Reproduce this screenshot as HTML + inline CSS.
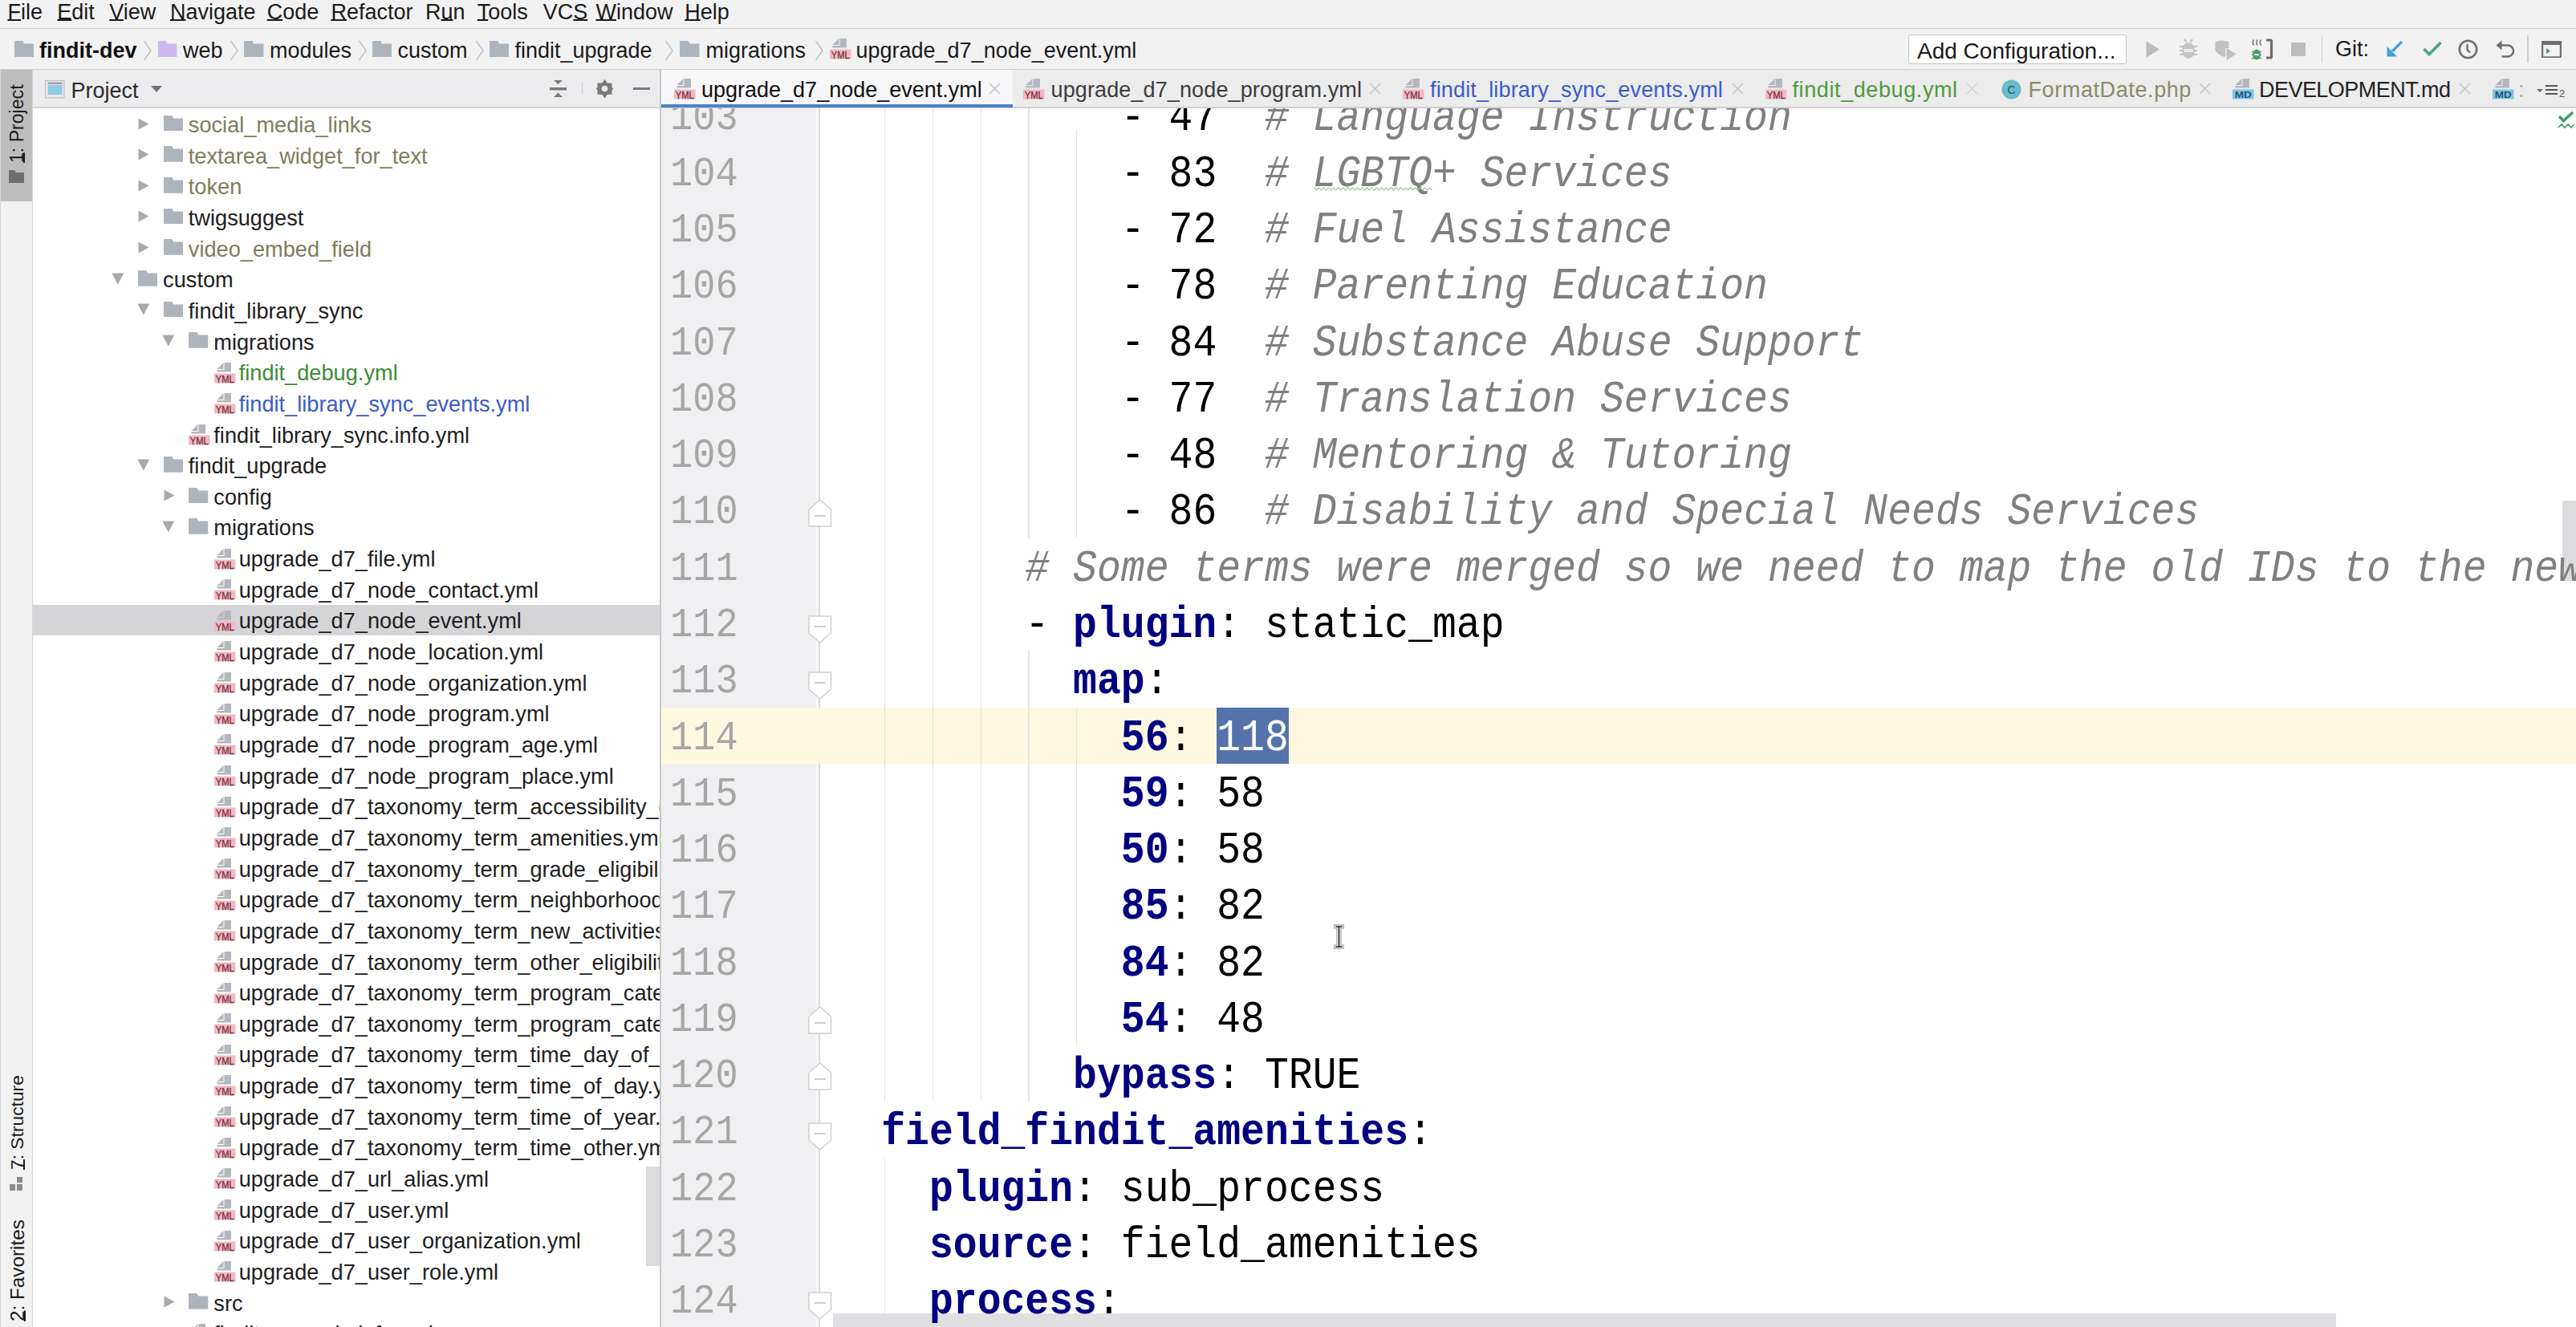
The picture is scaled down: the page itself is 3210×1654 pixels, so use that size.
<!DOCTYPE html><html><head><meta charset='utf-8'><style>
*{margin:0;padding:0;box-sizing:border-box}
html,body{width:3210px;height:1654px;overflow:hidden;background:#f2f2f2;font-family:"Liberation Sans", sans-serif}
.a{position:absolute}
.t{position:absolute;white-space:pre;font-family:"Liberation Sans", sans-serif;font-size:27px;line-height:1}
.m{position:absolute;white-space:pre;font-family:"Liberation Mono", monospace;}
u{text-decoration:underline;text-decoration-thickness:2px;text-underline-offset:0px}
</style></head><body>
<div class="a" style="left:0;top:0;width:3210px;height:35px;background:#f2f2f2"></div>
<div class="a" style="left:0;top:35px;width:3210px;height:1px;background:#d4d4d4"></div>
<div class="t" style="left:9.5px;top:2px;color:#1a1a1a"><u>F</u>ile</div>
<div class="t" style="left:71.3px;top:2px;color:#1a1a1a"><u>E</u>dit</div>
<div class="t" style="left:136.3px;top:2px;color:#1a1a1a"><u>V</u>iew</div>
<div class="t" style="left:212px;top:2px;color:#1a1a1a"><u>N</u>avigate</div>
<div class="t" style="left:332.7px;top:2px;color:#1a1a1a"><u>C</u>ode</div>
<div class="t" style="left:412.4px;top:2px;color:#1a1a1a"><u>R</u>efactor</div>
<div class="t" style="left:530px;top:2px;color:#1a1a1a">R<u>u</u>n</div>
<div class="t" style="left:594.7px;top:2px;color:#1a1a1a"><u>T</u>ools</div>
<div class="t" style="left:676.8px;top:2px;color:#1a1a1a">VC<u>S</u></div>
<div class="t" style="left:742.5px;top:2px;color:#1a1a1a"><u>W</u>indow</div>
<div class="t" style="left:853.3px;top:2px;color:#1a1a1a"><u>H</u>elp</div>
<div class="a" style="left:0;top:36px;width:3210px;height:50px;background:#f2f2f2"></div>
<div class="a" style="left:0;top:86px;width:3210px;height:1px;background:#d0d0d0"></div>
<svg class="a" style="left:17.5px;top:50.8px" width="24.5" height="20" viewBox="0 0 24.5 20"><path d="M0 0 H10.3 L12.3 3.5 H24.5 V20 H0 Z" fill="#aeb4bc"/></svg>
<div class="t" style="left:49px;top:50px;font-weight:bold;color:#111">findit-dev</div>
<svg class="a" style="left:178px;top:50px" width="12" height="26" viewBox="0 0 12 26"><path d="M1.5 1 L10 13 L1.5 25" fill="none" stroke="#b4b4b4" stroke-width="1.2"/></svg>
<svg class="a" style="left:197.4px;top:50.8px" width="23.5" height="20" viewBox="0 0 23.5 20"><path d="M0 0 H9.9 L11.9 3.5 H23.5 V20 H0 Z" fill="#cdb9f0"/></svg>
<div class="t" style="left:228px;top:50px;color:#1a1a1a">web</div>
<svg class="a" style="left:286px;top:50px" width="12" height="26" viewBox="0 0 12 26"><path d="M1.5 1 L10 13 L1.5 25" fill="none" stroke="#b4b4b4" stroke-width="1.2"/></svg>
<svg class="a" style="left:304px;top:50.8px" width="24.5" height="20" viewBox="0 0 24.5 20"><path d="M0 0 H10.3 L12.3 3.5 H24.5 V20 H0 Z" fill="#aeb4bc"/></svg>
<div class="t" style="left:336px;top:50px;color:#1a1a1a">modules</div>
<svg class="a" style="left:446px;top:50px" width="12" height="26" viewBox="0 0 12 26"><path d="M1.5 1 L10 13 L1.5 25" fill="none" stroke="#b4b4b4" stroke-width="1.2"/></svg>
<svg class="a" style="left:464px;top:50.8px" width="24" height="20" viewBox="0 0 24 20"><path d="M0 0 H10.1 L12.1 3.5 H24 V20 H0 Z" fill="#aeb4bc"/></svg>
<div class="t" style="left:495.5px;top:50px;color:#1a1a1a">custom</div>
<svg class="a" style="left:592px;top:50px" width="12" height="26" viewBox="0 0 12 26"><path d="M1.5 1 L10 13 L1.5 25" fill="none" stroke="#b4b4b4" stroke-width="1.2"/></svg>
<svg class="a" style="left:609.7px;top:50.8px" width="24.5" height="20" viewBox="0 0 24.5 20"><path d="M0 0 H10.3 L12.3 3.5 H24.5 V20 H0 Z" fill="#aeb4bc"/></svg>
<div class="t" style="left:641.5px;top:50px;color:#1a1a1a">findit_upgrade</div>
<svg class="a" style="left:828px;top:50px" width="12" height="26" viewBox="0 0 12 26"><path d="M1.5 1 L10 13 L1.5 25" fill="none" stroke="#b4b4b4" stroke-width="1.2"/></svg>
<svg class="a" style="left:847px;top:50.8px" width="24.5" height="20" viewBox="0 0 24.5 20"><path d="M0 0 H10.3 L12.3 3.5 H24.5 V20 H0 Z" fill="#aeb4bc"/></svg>
<div class="t" style="left:879.5px;top:50px;color:#1a1a1a">migrations</div>
<svg class="a" style="left:1015px;top:50px" width="12" height="26" viewBox="0 0 12 26"><path d="M1.5 1 L10 13 L1.5 25" fill="none" stroke="#b4b4b4" stroke-width="1.2"/></svg>
<svg class="a" style="left:1034px;top:48px" width="27" height="27" viewBox="0 0 27 27"><path d="M12.5 0 H21 V11.5 H3.5 V9 H12.5 Z" fill="#b4b8be"/><path d="M3.5 8 L11.5 0 V8 Z" fill="#b4b8be"/><rect x="0" y="13.5" width="26.5" height="12" fill="#f1b9c4"/><text x="13.2" y="24.6" text-anchor="middle" font-family="Liberation Sans" font-size="12.5" fill="#7a2f3f" stroke="#7a2f3f" stroke-width="0.3" textLength="23" lengthAdjust="spacingAndGlyphs">YML</text></svg>
<div class="t" style="left:1066.5px;top:50px;color:#1a1a1a">upgrade_d7_node_event.yml</div>
<div class="a" style="left:2378px;top:42.5px;width:271.5px;height:37px;background:#fff;border:1px solid #c4c4c4;border-radius:3px"></div>
<div class="t" style="left:2389px;top:49.5px;color:#1a1a1a;font-size:28px">Add Configuration...</div>
<svg class="a" style="left:2674px;top:51px" width="18" height="21" viewBox="0 0 18 21"><path d="M0.5 0.2 L17 10.5 L0.5 20.8Z" fill="#bcbcbc"/></svg>
<svg class="a" style="left:2716px;top:48px" width="22" height="26" viewBox="0 0 22 26"><path d="M6 1 L8.5 4.5 M16 1 L13.5 4.5" stroke="#c4c4c4" stroke-width="2.2"/><ellipse cx="11" cy="15" rx="8" ry="10" fill="#c4c4c4"/><path d="M0 10 H22 M0 15 H22 M0 20 H22" stroke="#c4c4c4" stroke-width="2.2"/><rect x="5.5" y="13" width="11" height="4" fill="#ededed"/></svg>
<svg class="a" style="left:2760px;top:50px" width="28" height="26" viewBox="0 0 28 26"><path d="M0.5 2 Q8 -1 17.5 2 V10 H13 V21 Q6 20.5 0.5 13Z" fill="#c2c2c2"/><path d="M14.5 10 L27 17.5 L14.5 25Z" fill="#c2c2c2"/></svg>
<svg class="a" style="left:2805px;top:48px" width="28" height="28" viewBox="0 0 28 28"><path d="M3.5 1.5 q-2.5 3.5 0 7 M8 1.5 q-2.5 3.5 0 7 M12.5 1.5 q-2.5 3.5 0 7" stroke="#7a7a68" stroke-width="1.6" fill="none"/><ellipse cx="7" cy="20" rx="4.8" ry="6.5" fill="#4a9a6a"/><path d="M1 16.5 H13 M1 20.5 H13 M1 24.5 H13" stroke="#4a9a6a" stroke-width="1.5"/><rect x="4" y="19" width="6" height="2.2" fill="#e8f2ea"/><path d="M19 2 H24 Q25.5 2 25.5 3.5 V22.5 Q25.5 24 24 24 H19" stroke="#6e6e6e" stroke-width="3.2" fill="none"/></svg>
<div class="a" style="left:2855px;top:52.5px;width:18px;height:17.5px;background:#bdbdbd"></div>
<div class="a" style="left:2892.5px;top:44px;width:1.5px;height:34px;background:#cfcfcf"></div>
<div class="t" style="left:2910px;top:48px;color:#1a1a1a">Git:</div>
<svg class="a" style="left:2974px;top:51px" width="20" height="20" viewBox="0 0 20 20"><path d="M19 1 L7 13" stroke="#3ea0dc" stroke-width="3.2"/><path d="M0.5 7 V19.5 H13Z" fill="#3ea0dc"/></svg>
<svg class="a" style="left:3018.5px;top:50.5px" width="24" height="19" viewBox="0 0 24 19"><path d="M1.5 10 L8 16.5 L22.5 2" stroke="#4aa57e" stroke-width="3.6" fill="none"/></svg>
<svg class="a" style="left:3063px;top:49px" width="25" height="25" viewBox="0 0 25 25"><circle cx="12.5" cy="12.5" r="10.7" stroke="#6e6e6e" stroke-width="2.6" fill="none"/><path d="M11.5 6 V13 L15 16.5" stroke="#6e6e6e" stroke-width="2.4" fill="none"/></svg>
<svg class="a" style="left:3110px;top:50px" width="25" height="23" viewBox="0 0 25 23"><path d="M6 6.5 H15 a7 7 0 0 1 0 14 H7.5" stroke="#6e6e6e" stroke-width="2.6" fill="none"/><path d="M0.5 6.5 L7.5 0.5 V12.5Z" fill="#6e6e6e"/></svg>
<div class="a" style="left:3149px;top:44px;width:1.5px;height:34px;background:#cfcfcf"></div>
<svg class="a" style="left:3166.5px;top:50.8px" width="25" height="21.5" viewBox="0 0 25 21.5"><rect x="1.1" y="1.1" width="22.8" height="19.3" stroke="#6e6e6e" stroke-width="2.2" fill="none"/><rect x="0" y="0" width="25" height="5" fill="#6e6e6e"/><path d="M6 9 L11 12.5 L6 16Z" fill="#3e9a6a"/></svg>
<div class="a" style="left:0;top:87px;width:40px;height:1567px;background:#f2f2f2"></div>
<div class="a" style="left:40px;top:87px;width:1px;height:1567px;background:#d6d6d6"></div>
<div class="a" style="left:0;top:87px;width:1px;height:1567px;background:#d6d6d6"></div>
<div class="a" style="left:1px;top:87px;width:39px;height:164px;background:#bebebe"></div>
<div class="t" style="left:10px;top:202.5px;font-size:23.1px;color:#1a1a1a;transform-origin:0 0;transform:rotate(-90deg)"><u>1</u>: Project</div>
<svg class="a" style="left:10.5px;top:212px" width="20" height="17" viewBox="0 0 20 17"><path d="M0 0 H7 L9 3 H19 V16 H0Z" fill="#6f6f6f"/></svg>
<div class="t" style="left:10px;top:1457.5px;font-size:22.8px;color:#1a1a1a;transform-origin:0 0;transform:rotate(-90deg)"><u>7</u>: Structure</div>
<svg class="a" style="left:12px;top:1467px" width="17" height="18" viewBox="0 0 17 18"><rect x="0" y="9" width="7" height="8" fill="#8a8a8a"/><rect x="9" y="9" width="7" height="8" fill="#8a8a8a"/><rect x="9" y="0" width="7" height="7" fill="#8a8a8a"/></svg>
<div class="t" style="left:10px;top:1646.5px;font-size:24.3px;color:#1a1a1a;transform-origin:0 0;transform:rotate(-90deg)"><u>2</u>: Favorites</div>
<div class="a" style="left:41px;top:87px;width:781px;height:47px;background:#ececee"></div>
<div class="a" style="left:41px;top:133px;width:781px;height:1.5px;background:#d2d2d4"></div>
<div class="a" style="left:41px;top:134.5px;width:781px;height:1519.5px;background:#ffffff"></div>
<div class="a" style="left:822px;top:87px;width:1.5px;height:1567px;background:#c9c9cb"></div>
<svg class="a" style="left:56px;top:100px" width="25" height="23" viewBox="0 0 25 23"><rect x="0.5" y="0.5" width="23.5" height="21.5" fill="#e8e8e8" stroke="#b8b8b8"/><rect x="3.5" y="6" width="18" height="12" fill="#8ccbe8"/><rect x="3.5" y="2.5" width="18" height="2.5" fill="#a0a0a0"/></svg>
<div class="t" style="left:88.5px;top:100px;color:#2a2a2a">Project</div>
<svg class="a" style="left:188px;top:107px" width="14" height="9"><path d="M0 0 H14 L7 8Z" fill="#707070"/></svg>
<svg class="a" style="left:685px;top:99px" width="22" height="23" viewBox="0 0 22 23"><path d="M5 1 H16 L10.5 6Z" fill="#7a7a7a"/><rect x="0" y="10" width="21" height="3.5" fill="#7a7a7a"/><path d="M5 22 H16 L10.5 16.5Z" fill="#7a7a7a"/></svg>
<div class="a" style="left:724.5px;top:103px;width:1.2px;height:14px;background:#c8c8c8"></div>
<svg class="a" style="left:742px;top:98px" width="23" height="25" viewBox="0 0 23 25"><path d="M11.5 0 L15 5 L21 5 L21 11 L23 12.5 L21 14 L21 20 L15 20 L11.5 25 L8 20 L2 20 L2 14 L0 12.5 L2 11 L2 5 L8 5Z" fill="#7a7a7a" transform="translate(11.5 12.5) scale(0.95) translate(-11.5 -12.5)"/><circle cx="11.5" cy="12.5" r="3.8" fill="#ececee"/></svg>
<div class="a" style="left:788.5px;top:108.8px;width:21.5px;height:3.5px;background:#7a7a7a"></div>
<div class="a" style="left:41px;top:135px;width:781px;height:1519px;overflow:hidden">
<svg class="a" style="left:131.3px;top:11.5px" width="14" height="15" viewBox="0 0 14 15"><path d="M0.5 0.5 L13.5 7.5 L0.5 14.5Z" fill="#a9a9a9"/></svg>
<svg class="a" style="left:162.8px;top:8.800000000000011px" width="24.3" height="19.7" viewBox="0 0 24.3 19.7"><path d="M0 0 H10.2 L12.2 3.5 H24.3 V19.7 H0 Z" fill="#aeb4bc"/></svg>
<div class="t" style="left:193.8px;top:7.10px;color:#807c5c;font-size:27.2px">social_media_links</div>
<svg class="a" style="left:131.3px;top:50.1px" width="14" height="15" viewBox="0 0 14 15"><path d="M0.5 0.5 L13.5 7.5 L0.5 14.5Z" fill="#a9a9a9"/></svg>
<svg class="a" style="left:162.8px;top:47.44500000000002px" width="24.3" height="19.7" viewBox="0 0 24.3 19.7"><path d="M0 0 H10.2 L12.2 3.5 H24.3 V19.7 H0 Z" fill="#aeb4bc"/></svg>
<div class="t" style="left:193.8px;top:45.75px;color:#807c5c;font-size:27.2px">textarea_widget_for_text</div>
<svg class="a" style="left:131.3px;top:88.8px" width="14" height="15" viewBox="0 0 14 15"><path d="M0.5 0.5 L13.5 7.5 L0.5 14.5Z" fill="#a9a9a9"/></svg>
<svg class="a" style="left:162.8px;top:86.09000000000003px" width="24.3" height="19.7" viewBox="0 0 24.3 19.7"><path d="M0 0 H10.2 L12.2 3.5 H24.3 V19.7 H0 Z" fill="#aeb4bc"/></svg>
<div class="t" style="left:193.8px;top:84.39px;color:#807c5c;font-size:27.2px">token</div>
<svg class="a" style="left:131.3px;top:127.4px" width="14" height="15" viewBox="0 0 14 15"><path d="M0.5 0.5 L13.5 7.5 L0.5 14.5Z" fill="#a9a9a9"/></svg>
<svg class="a" style="left:162.8px;top:124.73500000000001px" width="24.3" height="19.7" viewBox="0 0 24.3 19.7"><path d="M0 0 H10.2 L12.2 3.5 H24.3 V19.7 H0 Z" fill="#aeb4bc"/></svg>
<div class="t" style="left:193.8px;top:123.04px;color:#1e1e1e;font-size:27.2px">twigsuggest</div>
<svg class="a" style="left:131.3px;top:166.1px" width="14" height="15" viewBox="0 0 14 15"><path d="M0.5 0.5 L13.5 7.5 L0.5 14.5Z" fill="#a9a9a9"/></svg>
<svg class="a" style="left:162.8px;top:163.38000000000005px" width="24.3" height="19.7" viewBox="0 0 24.3 19.7"><path d="M0 0 H10.2 L12.2 3.5 H24.3 V19.7 H0 Z" fill="#aeb4bc"/></svg>
<div class="t" style="left:193.8px;top:161.68px;color:#807c5c;font-size:27.2px">video_embed_field</div>
<svg class="a" style="left:98.1px;top:204.7px" width="16" height="15" viewBox="0 0 16 15"><path d="M0.3 0.5 L15.3 0.5 L7.8 14.5Z" fill="#a9a9a9"/></svg>
<svg class="a" style="left:131.1px;top:202.02500000000003px" width="24.3" height="19.7" viewBox="0 0 24.3 19.7"><path d="M0 0 H10.2 L12.2 3.5 H24.3 V19.7 H0 Z" fill="#aeb4bc"/></svg>
<div class="t" style="left:162.1px;top:200.33px;color:#1e1e1e;font-size:27.2px">custom</div>
<svg class="a" style="left:129.8px;top:243.4px" width="16" height="15" viewBox="0 0 16 15"><path d="M0.3 0.5 L15.3 0.5 L7.8 14.5Z" fill="#a9a9a9"/></svg>
<svg class="a" style="left:162.8px;top:240.67000000000002px" width="24.3" height="19.7" viewBox="0 0 24.3 19.7"><path d="M0 0 H10.2 L12.2 3.5 H24.3 V19.7 H0 Z" fill="#aeb4bc"/></svg>
<div class="t" style="left:193.8px;top:238.97px;color:#1e1e1e;font-size:27.2px">findit_library_sync</div>
<svg class="a" style="left:161.3px;top:282.0px" width="16" height="15" viewBox="0 0 16 15"><path d="M0.3 0.5 L15.3 0.5 L7.8 14.5Z" fill="#a9a9a9"/></svg>
<svg class="a" style="left:194.3px;top:279.31500000000005px" width="24.3" height="19.7" viewBox="0 0 24.3 19.7"><path d="M0 0 H10.2 L12.2 3.5 H24.3 V19.7 H0 Z" fill="#aeb4bc"/></svg>
<div class="t" style="left:225.3px;top:277.62px;color:#1e1e1e;font-size:27.2px">migrations</div>
<svg class="a" style="left:225.8px;top:316.66px" width="27" height="27" viewBox="0 0 27 27"><path d="M12.5 0 H21 V11.5 H3.5 V9 H12.5 Z" fill="#b4b8be"/><path d="M3.5 8 L11.5 0 V8 Z" fill="#b4b8be"/><rect x="0" y="13.5" width="26.5" height="12" fill="#f1b9c4"/><text x="13.2" y="24.6" text-anchor="middle" font-family="Liberation Sans" font-size="12.5" fill="#7a2f3f" stroke="#7a2f3f" stroke-width="0.3" textLength="23" lengthAdjust="spacingAndGlyphs">YML</text></svg>
<div class="t" style="left:256.7px;top:316.26px;color:#3d8c35;font-size:27.2px">findit_debug.yml</div>
<svg class="a" style="left:225.8px;top:355.305px" width="27" height="27" viewBox="0 0 27 27"><path d="M12.5 0 H21 V11.5 H3.5 V9 H12.5 Z" fill="#b4b8be"/><path d="M3.5 8 L11.5 0 V8 Z" fill="#b4b8be"/><rect x="0" y="13.5" width="26.5" height="12" fill="#f1b9c4"/><text x="13.2" y="24.6" text-anchor="middle" font-family="Liberation Sans" font-size="12.5" fill="#7a2f3f" stroke="#7a2f3f" stroke-width="0.3" textLength="23" lengthAdjust="spacingAndGlyphs">YML</text></svg>
<div class="t" style="left:256.7px;top:354.91px;color:#3a5cc8;font-size:27.2px">findit_library_sync_events.yml</div>
<svg class="a" style="left:194.4px;top:393.95000000000005px" width="27" height="27" viewBox="0 0 27 27"><path d="M12.5 0 H21 V11.5 H3.5 V9 H12.5 Z" fill="#b4b8be"/><path d="M3.5 8 L11.5 0 V8 Z" fill="#b4b8be"/><rect x="0" y="13.5" width="26.5" height="12" fill="#f1b9c4"/><text x="13.2" y="24.6" text-anchor="middle" font-family="Liberation Sans" font-size="12.5" fill="#7a2f3f" stroke="#7a2f3f" stroke-width="0.3" textLength="23" lengthAdjust="spacingAndGlyphs">YML</text></svg>
<div class="t" style="left:225.3px;top:393.55px;color:#1e1e1e;font-size:27.2px">findit_library_sync.info.yml</div>
<svg class="a" style="left:129.8px;top:436.6px" width="16" height="15" viewBox="0 0 16 15"><path d="M0.3 0.5 L15.3 0.5 L7.8 14.5Z" fill="#a9a9a9"/></svg>
<svg class="a" style="left:162.8px;top:433.895px" width="24.3" height="19.7" viewBox="0 0 24.3 19.7"><path d="M0 0 H10.2 L12.2 3.5 H24.3 V19.7 H0 Z" fill="#aeb4bc"/></svg>
<div class="t" style="left:193.8px;top:432.20px;color:#1e1e1e;font-size:27.2px">findit_upgrade</div>
<svg class="a" style="left:162.8px;top:475.2px" width="14" height="15" viewBox="0 0 14 15"><path d="M0.5 0.5 L13.5 7.5 L0.5 14.5Z" fill="#a9a9a9"/></svg>
<svg class="a" style="left:194.3px;top:472.53999999999996px" width="24.3" height="19.7" viewBox="0 0 24.3 19.7"><path d="M0 0 H10.2 L12.2 3.5 H24.3 V19.7 H0 Z" fill="#aeb4bc"/></svg>
<div class="t" style="left:225.3px;top:470.84px;color:#1e1e1e;font-size:27.2px">config</div>
<svg class="a" style="left:161.3px;top:513.9px" width="16" height="15" viewBox="0 0 16 15"><path d="M0.3 0.5 L15.3 0.5 L7.8 14.5Z" fill="#a9a9a9"/></svg>
<svg class="a" style="left:194.3px;top:511.18499999999995px" width="24.3" height="19.7" viewBox="0 0 24.3 19.7"><path d="M0 0 H10.2 L12.2 3.5 H24.3 V19.7 H0 Z" fill="#aeb4bc"/></svg>
<div class="t" style="left:225.3px;top:509.49px;color:#1e1e1e;font-size:27.2px">migrations</div>
<svg class="a" style="left:225.8px;top:548.5300000000001px" width="27" height="27" viewBox="0 0 27 27"><path d="M12.5 0 H21 V11.5 H3.5 V9 H12.5 Z" fill="#b4b8be"/><path d="M3.5 8 L11.5 0 V8 Z" fill="#b4b8be"/><rect x="0" y="13.5" width="26.5" height="12" fill="#f1b9c4"/><text x="13.2" y="24.6" text-anchor="middle" font-family="Liberation Sans" font-size="12.5" fill="#7a2f3f" stroke="#7a2f3f" stroke-width="0.3" textLength="23" lengthAdjust="spacingAndGlyphs">YML</text></svg>
<div class="t" style="left:256.7px;top:548.13px;color:#1e1e1e;font-size:27.2px">upgrade_d7_file.yml</div>
<svg class="a" style="left:225.8px;top:587.1750000000001px" width="27" height="27" viewBox="0 0 27 27"><path d="M12.5 0 H21 V11.5 H3.5 V9 H12.5 Z" fill="#b4b8be"/><path d="M3.5 8 L11.5 0 V8 Z" fill="#b4b8be"/><rect x="0" y="13.5" width="26.5" height="12" fill="#f1b9c4"/><text x="13.2" y="24.6" text-anchor="middle" font-family="Liberation Sans" font-size="12.5" fill="#7a2f3f" stroke="#7a2f3f" stroke-width="0.3" textLength="23" lengthAdjust="spacingAndGlyphs">YML</text></svg>
<div class="t" style="left:256.7px;top:586.78px;color:#1e1e1e;font-size:27.2px">upgrade_d7_node_contact.yml</div>
<div class="a" style="left:0;top:619.32px;width:781px;height:37.5px;background:#d5d5d8"></div>
<svg class="a" style="left:225.8px;top:625.82px" width="27" height="27" viewBox="0 0 27 27"><path d="M12.5 0 H21 V11.5 H3.5 V9 H12.5 Z" fill="#b4b8be"/><path d="M3.5 8 L11.5 0 V8 Z" fill="#b4b8be"/><rect x="0" y="13.5" width="26.5" height="12" fill="#f1b9c4"/><text x="13.2" y="24.6" text-anchor="middle" font-family="Liberation Sans" font-size="12.5" fill="#7a2f3f" stroke="#7a2f3f" stroke-width="0.3" textLength="23" lengthAdjust="spacingAndGlyphs">YML</text></svg>
<div class="t" style="left:256.7px;top:625.42px;color:#1e1e1e;font-size:27.2px">upgrade_d7_node_event.yml</div>
<svg class="a" style="left:225.8px;top:664.465px" width="27" height="27" viewBox="0 0 27 27"><path d="M12.5 0 H21 V11.5 H3.5 V9 H12.5 Z" fill="#b4b8be"/><path d="M3.5 8 L11.5 0 V8 Z" fill="#b4b8be"/><rect x="0" y="13.5" width="26.5" height="12" fill="#f1b9c4"/><text x="13.2" y="24.6" text-anchor="middle" font-family="Liberation Sans" font-size="12.5" fill="#7a2f3f" stroke="#7a2f3f" stroke-width="0.3" textLength="23" lengthAdjust="spacingAndGlyphs">YML</text></svg>
<div class="t" style="left:256.7px;top:664.07px;color:#1e1e1e;font-size:27.2px">upgrade_d7_node_location.yml</div>
<svg class="a" style="left:225.8px;top:703.11px" width="27" height="27" viewBox="0 0 27 27"><path d="M12.5 0 H21 V11.5 H3.5 V9 H12.5 Z" fill="#b4b8be"/><path d="M3.5 8 L11.5 0 V8 Z" fill="#b4b8be"/><rect x="0" y="13.5" width="26.5" height="12" fill="#f1b9c4"/><text x="13.2" y="24.6" text-anchor="middle" font-family="Liberation Sans" font-size="12.5" fill="#7a2f3f" stroke="#7a2f3f" stroke-width="0.3" textLength="23" lengthAdjust="spacingAndGlyphs">YML</text></svg>
<div class="t" style="left:256.7px;top:702.71px;color:#1e1e1e;font-size:27.2px">upgrade_d7_node_organization.yml</div>
<svg class="a" style="left:225.8px;top:741.7550000000001px" width="27" height="27" viewBox="0 0 27 27"><path d="M12.5 0 H21 V11.5 H3.5 V9 H12.5 Z" fill="#b4b8be"/><path d="M3.5 8 L11.5 0 V8 Z" fill="#b4b8be"/><rect x="0" y="13.5" width="26.5" height="12" fill="#f1b9c4"/><text x="13.2" y="24.6" text-anchor="middle" font-family="Liberation Sans" font-size="12.5" fill="#7a2f3f" stroke="#7a2f3f" stroke-width="0.3" textLength="23" lengthAdjust="spacingAndGlyphs">YML</text></svg>
<div class="t" style="left:256.7px;top:741.36px;color:#1e1e1e;font-size:27.2px">upgrade_d7_node_program.yml</div>
<svg class="a" style="left:225.8px;top:780.4000000000001px" width="27" height="27" viewBox="0 0 27 27"><path d="M12.5 0 H21 V11.5 H3.5 V9 H12.5 Z" fill="#b4b8be"/><path d="M3.5 8 L11.5 0 V8 Z" fill="#b4b8be"/><rect x="0" y="13.5" width="26.5" height="12" fill="#f1b9c4"/><text x="13.2" y="24.6" text-anchor="middle" font-family="Liberation Sans" font-size="12.5" fill="#7a2f3f" stroke="#7a2f3f" stroke-width="0.3" textLength="23" lengthAdjust="spacingAndGlyphs">YML</text></svg>
<div class="t" style="left:256.7px;top:780.00px;color:#1e1e1e;font-size:27.2px">upgrade_d7_node_program_age.yml</div>
<svg class="a" style="left:225.8px;top:819.0450000000001px" width="27" height="27" viewBox="0 0 27 27"><path d="M12.5 0 H21 V11.5 H3.5 V9 H12.5 Z" fill="#b4b8be"/><path d="M3.5 8 L11.5 0 V8 Z" fill="#b4b8be"/><rect x="0" y="13.5" width="26.5" height="12" fill="#f1b9c4"/><text x="13.2" y="24.6" text-anchor="middle" font-family="Liberation Sans" font-size="12.5" fill="#7a2f3f" stroke="#7a2f3f" stroke-width="0.3" textLength="23" lengthAdjust="spacingAndGlyphs">YML</text></svg>
<div class="t" style="left:256.7px;top:818.65px;color:#1e1e1e;font-size:27.2px">upgrade_d7_node_program_place.yml</div>
<svg class="a" style="left:225.8px;top:857.69px" width="27" height="27" viewBox="0 0 27 27"><path d="M12.5 0 H21 V11.5 H3.5 V9 H12.5 Z" fill="#b4b8be"/><path d="M3.5 8 L11.5 0 V8 Z" fill="#b4b8be"/><rect x="0" y="13.5" width="26.5" height="12" fill="#f1b9c4"/><text x="13.2" y="24.6" text-anchor="middle" font-family="Liberation Sans" font-size="12.5" fill="#7a2f3f" stroke="#7a2f3f" stroke-width="0.3" textLength="23" lengthAdjust="spacingAndGlyphs">YML</text></svg>
<div class="t" style="left:256.7px;top:857.29px;color:#1e1e1e;font-size:27.2px">upgrade_d7_taxonomy_term_accessibility_options.yml</div>
<svg class="a" style="left:225.8px;top:896.335px" width="27" height="27" viewBox="0 0 27 27"><path d="M12.5 0 H21 V11.5 H3.5 V9 H12.5 Z" fill="#b4b8be"/><path d="M3.5 8 L11.5 0 V8 Z" fill="#b4b8be"/><rect x="0" y="13.5" width="26.5" height="12" fill="#f1b9c4"/><text x="13.2" y="24.6" text-anchor="middle" font-family="Liberation Sans" font-size="12.5" fill="#7a2f3f" stroke="#7a2f3f" stroke-width="0.3" textLength="23" lengthAdjust="spacingAndGlyphs">YML</text></svg>
<div class="t" style="left:256.7px;top:895.93px;color:#1e1e1e;font-size:27.2px">upgrade_d7_taxonomy_term_amenities.yml</div>
<svg class="a" style="left:225.8px;top:934.98px" width="27" height="27" viewBox="0 0 27 27"><path d="M12.5 0 H21 V11.5 H3.5 V9 H12.5 Z" fill="#b4b8be"/><path d="M3.5 8 L11.5 0 V8 Z" fill="#b4b8be"/><rect x="0" y="13.5" width="26.5" height="12" fill="#f1b9c4"/><text x="13.2" y="24.6" text-anchor="middle" font-family="Liberation Sans" font-size="12.5" fill="#7a2f3f" stroke="#7a2f3f" stroke-width="0.3" textLength="23" lengthAdjust="spacingAndGlyphs">YML</text></svg>
<div class="t" style="left:256.7px;top:934.58px;color:#1e1e1e;font-size:27.2px">upgrade_d7_taxonomy_term_grade_eligibility.yml</div>
<svg class="a" style="left:225.8px;top:973.625px" width="27" height="27" viewBox="0 0 27 27"><path d="M12.5 0 H21 V11.5 H3.5 V9 H12.5 Z" fill="#b4b8be"/><path d="M3.5 8 L11.5 0 V8 Z" fill="#b4b8be"/><rect x="0" y="13.5" width="26.5" height="12" fill="#f1b9c4"/><text x="13.2" y="24.6" text-anchor="middle" font-family="Liberation Sans" font-size="12.5" fill="#7a2f3f" stroke="#7a2f3f" stroke-width="0.3" textLength="23" lengthAdjust="spacingAndGlyphs">YML</text></svg>
<div class="t" style="left:256.7px;top:973.22px;color:#1e1e1e;font-size:27.2px">upgrade_d7_taxonomy_term_neighborhoods.yml</div>
<svg class="a" style="left:225.8px;top:1012.27px" width="27" height="27" viewBox="0 0 27 27"><path d="M12.5 0 H21 V11.5 H3.5 V9 H12.5 Z" fill="#b4b8be"/><path d="M3.5 8 L11.5 0 V8 Z" fill="#b4b8be"/><rect x="0" y="13.5" width="26.5" height="12" fill="#f1b9c4"/><text x="13.2" y="24.6" text-anchor="middle" font-family="Liberation Sans" font-size="12.5" fill="#7a2f3f" stroke="#7a2f3f" stroke-width="0.3" textLength="23" lengthAdjust="spacingAndGlyphs">YML</text></svg>
<div class="t" style="left:256.7px;top:1011.87px;color:#1e1e1e;font-size:27.2px">upgrade_d7_taxonomy_term_new_activities.yml</div>
<svg class="a" style="left:225.8px;top:1050.9150000000002px" width="27" height="27" viewBox="0 0 27 27"><path d="M12.5 0 H21 V11.5 H3.5 V9 H12.5 Z" fill="#b4b8be"/><path d="M3.5 8 L11.5 0 V8 Z" fill="#b4b8be"/><rect x="0" y="13.5" width="26.5" height="12" fill="#f1b9c4"/><text x="13.2" y="24.6" text-anchor="middle" font-family="Liberation Sans" font-size="12.5" fill="#7a2f3f" stroke="#7a2f3f" stroke-width="0.3" textLength="23" lengthAdjust="spacingAndGlyphs">YML</text></svg>
<div class="t" style="left:256.7px;top:1050.52px;color:#1e1e1e;font-size:27.2px">upgrade_d7_taxonomy_term_other_eligibility.yml</div>
<svg class="a" style="left:225.8px;top:1089.5600000000002px" width="27" height="27" viewBox="0 0 27 27"><path d="M12.5 0 H21 V11.5 H3.5 V9 H12.5 Z" fill="#b4b8be"/><path d="M3.5 8 L11.5 0 V8 Z" fill="#b4b8be"/><rect x="0" y="13.5" width="26.5" height="12" fill="#f1b9c4"/><text x="13.2" y="24.6" text-anchor="middle" font-family="Liberation Sans" font-size="12.5" fill="#7a2f3f" stroke="#7a2f3f" stroke-width="0.3" textLength="23" lengthAdjust="spacingAndGlyphs">YML</text></svg>
<div class="t" style="left:256.7px;top:1089.16px;color:#1e1e1e;font-size:27.2px">upgrade_d7_taxonomy_term_program_categories.yml</div>
<svg class="a" style="left:225.8px;top:1128.2050000000002px" width="27" height="27" viewBox="0 0 27 27"><path d="M12.5 0 H21 V11.5 H3.5 V9 H12.5 Z" fill="#b4b8be"/><path d="M3.5 8 L11.5 0 V8 Z" fill="#b4b8be"/><rect x="0" y="13.5" width="26.5" height="12" fill="#f1b9c4"/><text x="13.2" y="24.6" text-anchor="middle" font-family="Liberation Sans" font-size="12.5" fill="#7a2f3f" stroke="#7a2f3f" stroke-width="0.3" textLength="23" lengthAdjust="spacingAndGlyphs">YML</text></svg>
<div class="t" style="left:256.7px;top:1127.81px;color:#1e1e1e;font-size:27.2px">upgrade_d7_taxonomy_term_program_categories_old.yml</div>
<svg class="a" style="left:225.8px;top:1166.8500000000001px" width="27" height="27" viewBox="0 0 27 27"><path d="M12.5 0 H21 V11.5 H3.5 V9 H12.5 Z" fill="#b4b8be"/><path d="M3.5 8 L11.5 0 V8 Z" fill="#b4b8be"/><rect x="0" y="13.5" width="26.5" height="12" fill="#f1b9c4"/><text x="13.2" y="24.6" text-anchor="middle" font-family="Liberation Sans" font-size="12.5" fill="#7a2f3f" stroke="#7a2f3f" stroke-width="0.3" textLength="23" lengthAdjust="spacingAndGlyphs">YML</text></svg>
<div class="t" style="left:256.7px;top:1166.45px;color:#1e1e1e;font-size:27.2px">upgrade_d7_taxonomy_term_time_day_of_week.yml</div>
<svg class="a" style="left:225.8px;top:1205.4950000000001px" width="27" height="27" viewBox="0 0 27 27"><path d="M12.5 0 H21 V11.5 H3.5 V9 H12.5 Z" fill="#b4b8be"/><path d="M3.5 8 L11.5 0 V8 Z" fill="#b4b8be"/><rect x="0" y="13.5" width="26.5" height="12" fill="#f1b9c4"/><text x="13.2" y="24.6" text-anchor="middle" font-family="Liberation Sans" font-size="12.5" fill="#7a2f3f" stroke="#7a2f3f" stroke-width="0.3" textLength="23" lengthAdjust="spacingAndGlyphs">YML</text></svg>
<div class="t" style="left:256.7px;top:1205.10px;color:#1e1e1e;font-size:27.2px">upgrade_d7_taxonomy_term_time_of_day.yml</div>
<svg class="a" style="left:225.8px;top:1244.14px" width="27" height="27" viewBox="0 0 27 27"><path d="M12.5 0 H21 V11.5 H3.5 V9 H12.5 Z" fill="#b4b8be"/><path d="M3.5 8 L11.5 0 V8 Z" fill="#b4b8be"/><rect x="0" y="13.5" width="26.5" height="12" fill="#f1b9c4"/><text x="13.2" y="24.6" text-anchor="middle" font-family="Liberation Sans" font-size="12.5" fill="#7a2f3f" stroke="#7a2f3f" stroke-width="0.3" textLength="23" lengthAdjust="spacingAndGlyphs">YML</text></svg>
<div class="t" style="left:256.7px;top:1243.74px;color:#1e1e1e;font-size:27.2px">upgrade_d7_taxonomy_term_time_of_year.yml</div>
<svg class="a" style="left:225.8px;top:1282.785px" width="27" height="27" viewBox="0 0 27 27"><path d="M12.5 0 H21 V11.5 H3.5 V9 H12.5 Z" fill="#b4b8be"/><path d="M3.5 8 L11.5 0 V8 Z" fill="#b4b8be"/><rect x="0" y="13.5" width="26.5" height="12" fill="#f1b9c4"/><text x="13.2" y="24.6" text-anchor="middle" font-family="Liberation Sans" font-size="12.5" fill="#7a2f3f" stroke="#7a2f3f" stroke-width="0.3" textLength="23" lengthAdjust="spacingAndGlyphs">YML</text></svg>
<div class="t" style="left:256.7px;top:1282.38px;color:#1e1e1e;font-size:27.2px">upgrade_d7_taxonomy_term_time_other.yml</div>
<svg class="a" style="left:225.8px;top:1321.43px" width="27" height="27" viewBox="0 0 27 27"><path d="M12.5 0 H21 V11.5 H3.5 V9 H12.5 Z" fill="#b4b8be"/><path d="M3.5 8 L11.5 0 V8 Z" fill="#b4b8be"/><rect x="0" y="13.5" width="26.5" height="12" fill="#f1b9c4"/><text x="13.2" y="24.6" text-anchor="middle" font-family="Liberation Sans" font-size="12.5" fill="#7a2f3f" stroke="#7a2f3f" stroke-width="0.3" textLength="23" lengthAdjust="spacingAndGlyphs">YML</text></svg>
<div class="t" style="left:256.7px;top:1321.03px;color:#1e1e1e;font-size:27.2px">upgrade_d7_url_alias.yml</div>
<svg class="a" style="left:225.8px;top:1360.075px" width="27" height="27" viewBox="0 0 27 27"><path d="M12.5 0 H21 V11.5 H3.5 V9 H12.5 Z" fill="#b4b8be"/><path d="M3.5 8 L11.5 0 V8 Z" fill="#b4b8be"/><rect x="0" y="13.5" width="26.5" height="12" fill="#f1b9c4"/><text x="13.2" y="24.6" text-anchor="middle" font-family="Liberation Sans" font-size="12.5" fill="#7a2f3f" stroke="#7a2f3f" stroke-width="0.3" textLength="23" lengthAdjust="spacingAndGlyphs">YML</text></svg>
<div class="t" style="left:256.7px;top:1359.67px;color:#1e1e1e;font-size:27.2px">upgrade_d7_user.yml</div>
<svg class="a" style="left:225.8px;top:1398.72px" width="27" height="27" viewBox="0 0 27 27"><path d="M12.5 0 H21 V11.5 H3.5 V9 H12.5 Z" fill="#b4b8be"/><path d="M3.5 8 L11.5 0 V8 Z" fill="#b4b8be"/><rect x="0" y="13.5" width="26.5" height="12" fill="#f1b9c4"/><text x="13.2" y="24.6" text-anchor="middle" font-family="Liberation Sans" font-size="12.5" fill="#7a2f3f" stroke="#7a2f3f" stroke-width="0.3" textLength="23" lengthAdjust="spacingAndGlyphs">YML</text></svg>
<div class="t" style="left:256.7px;top:1398.32px;color:#1e1e1e;font-size:27.2px">upgrade_d7_user_organization.yml</div>
<svg class="a" style="left:225.8px;top:1437.365px" width="27" height="27" viewBox="0 0 27 27"><path d="M12.5 0 H21 V11.5 H3.5 V9 H12.5 Z" fill="#b4b8be"/><path d="M3.5 8 L11.5 0 V8 Z" fill="#b4b8be"/><rect x="0" y="13.5" width="26.5" height="12" fill="#f1b9c4"/><text x="13.2" y="24.6" text-anchor="middle" font-family="Liberation Sans" font-size="12.5" fill="#7a2f3f" stroke="#7a2f3f" stroke-width="0.3" textLength="23" lengthAdjust="spacingAndGlyphs">YML</text></svg>
<div class="t" style="left:256.7px;top:1436.96px;color:#1e1e1e;font-size:27.2px">upgrade_d7_user_role.yml</div>
<svg class="a" style="left:162.8px;top:1480.0px" width="14" height="15" viewBox="0 0 14 15"><path d="M0.5 0.5 L13.5 7.5 L0.5 14.5Z" fill="#a9a9a9"/></svg>
<svg class="a" style="left:194.3px;top:1477.3100000000002px" width="24.3" height="19.7" viewBox="0 0 24.3 19.7"><path d="M0 0 H10.2 L12.2 3.5 H24.3 V19.7 H0 Z" fill="#aeb4bc"/></svg>
<div class="t" style="left:225.3px;top:1475.61px;color:#1e1e1e;font-size:27.2px">src</div>
<svg class="a" style="left:194.4px;top:1514.6550000000002px" width="27" height="27" viewBox="0 0 27 27"><path d="M12.5 0 H21 V11.5 H3.5 V9 H12.5 Z" fill="#b4b8be"/><path d="M3.5 8 L11.5 0 V8 Z" fill="#b4b8be"/><rect x="0" y="13.5" width="26.5" height="12" fill="#f1b9c4"/><text x="13.2" y="24.6" text-anchor="middle" font-family="Liberation Sans" font-size="12.5" fill="#7a2f3f" stroke="#7a2f3f" stroke-width="0.3" textLength="23" lengthAdjust="spacingAndGlyphs">YML</text></svg>
<div class="t" style="left:225.3px;top:1514.26px;color:#1e1e1e;font-size:27.2px">findit_upgrade.info.yml</div>
</div>
<div class="a" style="left:805px;top:1454px;width:17px;height:124px;background:#dcdcde"></div>
<div class="a" style="left:823.5px;top:87px;width:2386.5px;height:47px;background:#ececec"></div>
<div class="a" style="left:823.5px;top:133px;width:2386.5px;height:1.5px;background:#d0d0d0"></div>
<div class="a" style="left:824px;top:87px;width:437.5px;height:47px;background:#f7f7f9"></div>
<div class="a" style="left:824px;top:130px;width:437.5px;height:4px;background:#4a82c4"></div>
<svg class="a" style="left:839.8px;top:97.5px" width="27" height="27" viewBox="0 0 27 27"><path d="M12.5 0 H21 V11.5 H3.5 V9 H12.5 Z" fill="#b4b8be"/><path d="M3.5 8 L11.5 0 V8 Z" fill="#b4b8be"/><rect x="0" y="13.5" width="26.5" height="12" fill="#f1b9c4"/><text x="13.2" y="24.6" text-anchor="middle" font-family="Liberation Sans" font-size="12.5" fill="#7a2f3f" stroke="#7a2f3f" stroke-width="0.3" textLength="23" lengthAdjust="spacingAndGlyphs">YML</text></svg>
<div class="t" style="left:874px;top:99px;color:#111">upgrade_d7_node_event.yml</div>
<svg class="a" style="left:1232px;top:103px" width="15" height="15" viewBox="0 0 15 15"><path d="M1 1 L14 14 M14 1 L1 14" stroke="#c2c2c2" stroke-width="1.3"/></svg>
<svg class="a" style="left:1275px;top:97.5px" width="27" height="27" viewBox="0 0 27 27"><path d="M12.5 0 H21 V11.5 H3.5 V9 H12.5 Z" fill="#b4b8be"/><path d="M3.5 8 L11.5 0 V8 Z" fill="#b4b8be"/><rect x="0" y="13.5" width="26.5" height="12" fill="#f1b9c4"/><text x="13.2" y="24.6" text-anchor="middle" font-family="Liberation Sans" font-size="12.5" fill="#7a2f3f" stroke="#7a2f3f" stroke-width="0.3" textLength="23" lengthAdjust="spacingAndGlyphs">YML</text></svg>
<div class="t" style="left:1309.5px;top:99px;color:#3c3c3c;letter-spacing:0.12px">upgrade_d7_node_program.yml</div>
<svg class="a" style="left:1706px;top:103px" width="15" height="15" viewBox="0 0 15 15"><path d="M1 1 L14 14 M14 1 L1 14" stroke="#c2c2c2" stroke-width="1.3"/></svg>
<svg class="a" style="left:1747.5px;top:97.5px" width="27" height="27" viewBox="0 0 27 27"><path d="M12.5 0 H21 V11.5 H3.5 V9 H12.5 Z" fill="#b4b8be"/><path d="M3.5 8 L11.5 0 V8 Z" fill="#b4b8be"/><rect x="0" y="13.5" width="26.5" height="12" fill="#f1b9c4"/><text x="13.2" y="24.6" text-anchor="middle" font-family="Liberation Sans" font-size="12.5" fill="#7a2f3f" stroke="#7a2f3f" stroke-width="0.3" textLength="23" lengthAdjust="spacingAndGlyphs">YML</text></svg>
<div class="t" style="left:1782px;top:99px;color:#3a5cc8;letter-spacing:0.16px">findit_library_sync_events.yml</div>
<svg class="a" style="left:2158px;top:103px" width="15" height="15" viewBox="0 0 15 15"><path d="M1 1 L14 14 M14 1 L1 14" stroke="#c2c2c2" stroke-width="1.3"/></svg>
<svg class="a" style="left:2200px;top:97.5px" width="27" height="27" viewBox="0 0 27 27"><path d="M12.5 0 H21 V11.5 H3.5 V9 H12.5 Z" fill="#b4b8be"/><path d="M3.5 8 L11.5 0 V8 Z" fill="#b4b8be"/><rect x="0" y="13.5" width="26.5" height="12" fill="#f1b9c4"/><text x="13.2" y="24.6" text-anchor="middle" font-family="Liberation Sans" font-size="12.5" fill="#7a2f3f" stroke="#7a2f3f" stroke-width="0.3" textLength="23" lengthAdjust="spacingAndGlyphs">YML</text></svg>
<div class="t" style="left:2233.5px;top:99px;color:#4f9a3f;letter-spacing:0.6px">findit_debug.yml</div>
<svg class="a" style="left:2450px;top:103px" width="15" height="15" viewBox="0 0 15 15"><path d="M1 1 L14 14 M14 1 L1 14" stroke="#d0d0d0" stroke-width="1.3"/></svg>
<svg class="a" style="left:2493.5px;top:98.5px" width="25" height="25" viewBox="0 0 25 25"><circle cx="12.5" cy="12.5" r="12" fill="#68bccc"/><text x="12.5" y="18" text-anchor="middle" font-family="Liberation Sans" font-size="14" fill="#1f5360">C</text></svg>
<div class="t" style="left:2527.5px;top:99px;color:#8c8a6a;letter-spacing:0.6px">FormatDate.php</div>
<svg class="a" style="left:2740px;top:103px" width="15" height="15" viewBox="0 0 15 15"><path d="M1 1 L14 14 M14 1 L1 14" stroke="#c2c2c2" stroke-width="1.3"/></svg>
<svg class="a" style="left:2781.5px;top:97.5px" width="27" height="27" viewBox="0 0 27 27"><path d="M12.5 0 H21 V11.5 H3.5 V9 H12.5 Z" fill="#b4b8be"/><path d="M3.5 8 L11.5 0 V8 Z" fill="#b4b8be"/><rect x="0" y="13.5" width="26.5" height="12" fill="#7cc4e4"/><text x="13.2" y="24.3" text-anchor="middle" font-family="Liberation Sans" font-weight="bold" font-size="11.5" fill="#23527a" textLength="21" lengthAdjust="spacingAndGlyphs">MD</text></svg>
<div class="t" style="left:2815px;top:99px;color:#222;letter-spacing:-0.54px">DEVELOPMENT.md</div>
<svg class="a" style="left:3064px;top:103px" width="15" height="15" viewBox="0 0 15 15"><path d="M1 1 L14 14 M14 1 L1 14" stroke="#c2c2c2" stroke-width="1.3"/></svg>
<svg class="a" style="left:3105.5px;top:97.5px" width="27" height="27" viewBox="0 0 27 27"><path d="M12.5 0 H21 V11.5 H3.5 V9 H12.5 Z" fill="#b4b8be"/><path d="M3.5 8 L11.5 0 V8 Z" fill="#b4b8be"/><rect x="0" y="13.5" width="26.5" height="12" fill="#7cc4e4"/><text x="13.2" y="24.3" text-anchor="middle" font-family="Liberation Sans" font-weight="bold" font-size="11.5" fill="#23527a" textLength="21" lengthAdjust="spacingAndGlyphs">MD</text></svg>
<div class="t" style="left:3138px;top:99px;color:#aaa">:</div>
<svg class="a" style="left:3161px;top:104px" width="42" height="18" viewBox="0 0 42 18"><path d="M0 7 H8 L4 11Z" fill="#666"/><path d="M11 3 H26 M11 8 H26 M11 13 H26" stroke="#555" stroke-width="2"/><text x="28" y="17" font-family="Liberation Sans" font-size="13" fill="#555">2</text></svg>
<div class="a" style="left:823.5px;top:134.5px;width:2386.5px;height:1519.5px;background:#ffffff;overflow:hidden">
<div class="a" style="left:0;top:0;width:193.20000000000005px;height:1519.5px;background:#f0f0f2"></div>
<div class="a" style="left:193.20000000000005px;top:0;width:3.6px;height:1519.5px;background:#f6f6f7"></div>
<div class="a" style="left:196.79999999999995px;top:0;width:2px;height:1519.5px;background:#dadadc"></div>
<div class="a" style="left:0;top:747.00px;width:2386.5px;height:70.27px;background:#fff8e0"></div>
<div class="a" style="left:278.62px;top:0.00px;width:1.3px;height:1238.89px;background:#e4e4e6"></div>
<div class="a" style="left:278.62px;top:1309.16px;width:1.3px;height:210.81px;background:#e4e4e6"></div>
<div class="a" style="left:338.34px;top:0.00px;width:1.3px;height:1238.89px;background:#e4e4e6"></div>
<div class="a" style="left:398.06px;top:0.00px;width:1.3px;height:1238.89px;background:#e4e4e6"></div>
<div class="a" style="left:457.78px;top:0.00px;width:1.3px;height:536.19px;background:#e4e4e6"></div>
<div class="a" style="left:457.78px;top:676.73px;width:1.3px;height:562.16px;background:#e4e4e6"></div>
<div class="a" style="left:517.50px;top:27.50px;width:1.3px;height:508.69px;background:#e4e4e6"></div>
<div class="a" style="left:517.50px;top:747.00px;width:1.3px;height:421.62px;background:#e4e4e6"></div>
<div class="a" style="left:214.79999999999995px;top:1502.5px;width:1873.1000000000001px;height:17px;background:#e0dfe2"></div>
<div class="a" style="left:2369.0px;top:489.5px;width:17.5px;height:100px;background:#dcdcde"></div>
<div class="a" style="left:692.76px;top:747.00px;width:89.58px;height:70.27px;background:#5573ab"></div>
<div class="m" style="left:573.32px;top:-25.97px;font-size:49.76px;line-height:70.27px;color:#000;transform-origin:0 48.38px;transform:translateY(4.82px) scaleY(1.1)">- 47  <i style="color:#808080"># Language Instruction</i></div>
<div class="m" style="left:11.5px;top:-25.97px;font-size:47px;line-height:70.27px;color:#a6a6a6;transform-origin:0 47.64px;transform:translateY(5.36px) scaleY(1.12)">103</div>
<div class="m" style="left:573.32px;top:44.30px;font-size:49.76px;line-height:70.27px;color:#000;transform-origin:0 48.38px;transform:translateY(4.82px) scaleY(1.1)">- 83  <i style="color:#808080"># LGBTQ+ Services</i></div>
<div class="m" style="left:11.5px;top:44.30px;font-size:47px;line-height:70.27px;color:#a6a6a6;transform-origin:0 47.64px;transform:translateY(5.36px) scaleY(1.12)">104</div>
<div class="m" style="left:573.32px;top:114.57px;font-size:49.76px;line-height:70.27px;color:#000;transform-origin:0 48.38px;transform:translateY(4.82px) scaleY(1.1)">- 72  <i style="color:#808080"># Fuel Assistance</i></div>
<div class="m" style="left:11.5px;top:114.57px;font-size:47px;line-height:70.27px;color:#a6a6a6;transform-origin:0 47.64px;transform:translateY(5.36px) scaleY(1.12)">105</div>
<div class="m" style="left:573.32px;top:184.84px;font-size:49.76px;line-height:70.27px;color:#000;transform-origin:0 48.38px;transform:translateY(4.82px) scaleY(1.1)">- 78  <i style="color:#808080"># Parenting Education</i></div>
<div class="m" style="left:11.5px;top:184.84px;font-size:47px;line-height:70.27px;color:#a6a6a6;transform-origin:0 47.64px;transform:translateY(5.36px) scaleY(1.12)">106</div>
<div class="m" style="left:573.32px;top:255.11px;font-size:49.76px;line-height:70.27px;color:#000;transform-origin:0 48.38px;transform:translateY(4.82px) scaleY(1.1)">- 84  <i style="color:#808080"># Substance Abuse Support</i></div>
<div class="m" style="left:11.5px;top:255.11px;font-size:47px;line-height:70.27px;color:#a6a6a6;transform-origin:0 47.64px;transform:translateY(5.36px) scaleY(1.12)">107</div>
<div class="m" style="left:573.32px;top:325.38px;font-size:49.76px;line-height:70.27px;color:#000;transform-origin:0 48.38px;transform:translateY(4.82px) scaleY(1.1)">- 77  <i style="color:#808080"># Translation Services</i></div>
<div class="m" style="left:11.5px;top:325.38px;font-size:47px;line-height:70.27px;color:#a6a6a6;transform-origin:0 47.64px;transform:translateY(5.36px) scaleY(1.12)">108</div>
<div class="m" style="left:573.32px;top:395.65px;font-size:49.76px;line-height:70.27px;color:#000;transform-origin:0 48.38px;transform:translateY(4.82px) scaleY(1.1)">- 48  <i style="color:#808080"># Mentoring &amp; Tutoring</i></div>
<div class="m" style="left:11.5px;top:395.65px;font-size:47px;line-height:70.27px;color:#a6a6a6;transform-origin:0 47.64px;transform:translateY(5.36px) scaleY(1.12)">109</div>
<div class="m" style="left:573.32px;top:465.92px;font-size:49.76px;line-height:70.27px;color:#000;transform-origin:0 48.38px;transform:translateY(4.82px) scaleY(1.1)">- 86  <i style="color:#808080"># Disability and Special Needs Services</i></div>
<div class="m" style="left:11.5px;top:465.92px;font-size:47px;line-height:70.27px;color:#a6a6a6;transform-origin:0 47.64px;transform:translateY(5.36px) scaleY(1.12)">110</div>
<div class="m" style="left:453.88px;top:536.19px;font-size:49.76px;line-height:70.27px;color:#000;transform-origin:0 48.38px;transform:translateY(4.82px) scaleY(1.1)"><i style="color:#808080"># Some terms were merged so we need to map the old IDs to the new IDs.</i></div>
<div class="m" style="left:11.5px;top:536.19px;font-size:47px;line-height:70.27px;color:#a6a6a6;transform-origin:0 47.64px;transform:translateY(5.36px) scaleY(1.12)">111</div>
<div class="m" style="left:453.88px;top:606.46px;font-size:49.76px;line-height:70.27px;color:#000;transform-origin:0 48.38px;transform:translateY(4.82px) scaleY(1.1)">- <b style="color:#000080">plugin</b>: static_map</div>
<div class="m" style="left:11.5px;top:606.46px;font-size:47px;line-height:70.27px;color:#a6a6a6;transform-origin:0 47.64px;transform:translateY(5.36px) scaleY(1.12)">112</div>
<div class="m" style="left:513.60px;top:676.73px;font-size:49.76px;line-height:70.27px;color:#000;transform-origin:0 48.38px;transform:translateY(4.82px) scaleY(1.1)"><b style="color:#000080">map</b>:</div>
<div class="m" style="left:11.5px;top:676.73px;font-size:47px;line-height:70.27px;color:#a6a6a6;transform-origin:0 47.64px;transform:translateY(5.36px) scaleY(1.12)">113</div>
<div class="m" style="left:573.32px;top:747.00px;font-size:49.76px;line-height:70.27px;color:#000;transform-origin:0 48.38px;transform:translateY(4.82px) scaleY(1.1)"><b style="color:#000080">56</b>: <span style="color:#fff">118</span></div>
<div class="m" style="left:11.5px;top:747.00px;font-size:47px;line-height:70.27px;color:#a6a6a6;transform-origin:0 47.64px;transform:translateY(5.36px) scaleY(1.12)">114</div>
<div class="m" style="left:573.32px;top:817.27px;font-size:49.76px;line-height:70.27px;color:#000;transform-origin:0 48.38px;transform:translateY(4.82px) scaleY(1.1)"><b style="color:#000080">59</b>: 58</div>
<div class="m" style="left:11.5px;top:817.27px;font-size:47px;line-height:70.27px;color:#a6a6a6;transform-origin:0 47.64px;transform:translateY(5.36px) scaleY(1.12)">115</div>
<div class="m" style="left:573.32px;top:887.54px;font-size:49.76px;line-height:70.27px;color:#000;transform-origin:0 48.38px;transform:translateY(4.82px) scaleY(1.1)"><b style="color:#000080">50</b>: 58</div>
<div class="m" style="left:11.5px;top:887.54px;font-size:47px;line-height:70.27px;color:#a6a6a6;transform-origin:0 47.64px;transform:translateY(5.36px) scaleY(1.12)">116</div>
<div class="m" style="left:573.32px;top:957.81px;font-size:49.76px;line-height:70.27px;color:#000;transform-origin:0 48.38px;transform:translateY(4.82px) scaleY(1.1)"><b style="color:#000080">85</b>: 82</div>
<div class="m" style="left:11.5px;top:957.81px;font-size:47px;line-height:70.27px;color:#a6a6a6;transform-origin:0 47.64px;transform:translateY(5.36px) scaleY(1.12)">117</div>
<div class="m" style="left:573.32px;top:1028.08px;font-size:49.76px;line-height:70.27px;color:#000;transform-origin:0 48.38px;transform:translateY(4.82px) scaleY(1.1)"><b style="color:#000080">84</b>: 82</div>
<div class="m" style="left:11.5px;top:1028.08px;font-size:47px;line-height:70.27px;color:#a6a6a6;transform-origin:0 47.64px;transform:translateY(5.36px) scaleY(1.12)">118</div>
<div class="m" style="left:573.32px;top:1098.35px;font-size:49.76px;line-height:70.27px;color:#000;transform-origin:0 48.38px;transform:translateY(4.82px) scaleY(1.1)"><b style="color:#000080">54</b>: 48</div>
<div class="m" style="left:11.5px;top:1098.35px;font-size:47px;line-height:70.27px;color:#a6a6a6;transform-origin:0 47.64px;transform:translateY(5.36px) scaleY(1.12)">119</div>
<div class="m" style="left:513.60px;top:1168.62px;font-size:49.76px;line-height:70.27px;color:#000;transform-origin:0 48.38px;transform:translateY(4.82px) scaleY(1.1)"><b style="color:#000080">bypass</b>: TRUE</div>
<div class="m" style="left:11.5px;top:1168.62px;font-size:47px;line-height:70.27px;color:#a6a6a6;transform-origin:0 47.64px;transform:translateY(5.36px) scaleY(1.12)">120</div>
<div class="m" style="left:274.72px;top:1238.89px;font-size:49.76px;line-height:70.27px;color:#000;transform-origin:0 48.38px;transform:translateY(4.82px) scaleY(1.1)"><b style="color:#000080">field_findit_amenities</b>:</div>
<div class="m" style="left:11.5px;top:1238.89px;font-size:47px;line-height:70.27px;color:#a6a6a6;transform-origin:0 47.64px;transform:translateY(5.36px) scaleY(1.12)">121</div>
<div class="m" style="left:334.44px;top:1309.16px;font-size:49.76px;line-height:70.27px;color:#000;transform-origin:0 48.38px;transform:translateY(4.82px) scaleY(1.1)"><b style="color:#000080">plugin</b>: sub_process</div>
<div class="m" style="left:11.5px;top:1309.16px;font-size:47px;line-height:70.27px;color:#a6a6a6;transform-origin:0 47.64px;transform:translateY(5.36px) scaleY(1.12)">122</div>
<div class="m" style="left:334.44px;top:1379.43px;font-size:49.76px;line-height:70.27px;color:#000;transform-origin:0 48.38px;transform:translateY(4.82px) scaleY(1.1)"><b style="color:#000080">source</b>: field_amenities</div>
<div class="m" style="left:11.5px;top:1379.43px;font-size:47px;line-height:70.27px;color:#a6a6a6;transform-origin:0 47.64px;transform:translateY(5.36px) scaleY(1.12)">123</div>
<div class="m" style="left:334.44px;top:1449.70px;font-size:49.76px;line-height:70.27px;color:#000;transform-origin:0 48.38px;transform:translateY(4.82px) scaleY(1.1)"><b style="color:#000080">process</b>:</div>
<div class="m" style="left:11.5px;top:1449.70px;font-size:47px;line-height:70.27px;color:#a6a6a6;transform-origin:0 47.64px;transform:translateY(5.36px) scaleY(1.12)">124</div>
<svg class="a" style="left:183.7px;top:632.1px" width="30" height="35" viewBox="0 0 30 35"><path d="M1 1 H28.5 V22 L14.75 34 L1 22Z" fill="#fff" stroke="#cfcfcf" stroke-width="1.5"/><path d="M8 14 H21.5" stroke="#bdbdbd" stroke-width="1.5"/></svg>
<svg class="a" style="left:183.7px;top:702.3px" width="30" height="35" viewBox="0 0 30 35"><path d="M1 1 H28.5 V22 L14.75 34 L1 22Z" fill="#fff" stroke="#cfcfcf" stroke-width="1.5"/><path d="M8 14 H21.5" stroke="#bdbdbd" stroke-width="1.5"/></svg>
<svg class="a" style="left:183.7px;top:1264.5px" width="30" height="35" viewBox="0 0 30 35"><path d="M1 1 H28.5 V22 L14.75 34 L1 22Z" fill="#fff" stroke="#cfcfcf" stroke-width="1.5"/><path d="M8 14 H21.5" stroke="#bdbdbd" stroke-width="1.5"/></svg>
<svg class="a" style="left:183.7px;top:1475.3px" width="30" height="35" viewBox="0 0 30 35"><path d="M1 1 H28.5 V22 L14.75 34 L1 22Z" fill="#fff" stroke="#cfcfcf" stroke-width="1.5"/><path d="M8 14 H21.5" stroke="#bdbdbd" stroke-width="1.5"/></svg>
<svg class="a" style="left:183.7px;top:487.2px" width="30" height="35" viewBox="0 0 30 35"><path d="M1 34 H28.5 V13 L14.75 1 L1 13Z" fill="#fff" stroke="#cfcfcf" stroke-width="1.5"/><path d="M8 21 H21.5" stroke="#bdbdbd" stroke-width="1.5"/></svg>
<svg class="a" style="left:183.7px;top:1119.6px" width="30" height="35" viewBox="0 0 30 35"><path d="M1 34 H28.5 V13 L14.75 1 L1 13Z" fill="#fff" stroke="#cfcfcf" stroke-width="1.5"/><path d="M8 21 H21.5" stroke="#bdbdbd" stroke-width="1.5"/></svg>
<svg class="a" style="left:183.7px;top:1189.9px" width="30" height="35" viewBox="0 0 30 35"><path d="M1 34 H28.5 V13 L14.75 1 L1 13Z" fill="#fff" stroke="#cfcfcf" stroke-width="1.5"/><path d="M8 21 H21.5" stroke="#bdbdbd" stroke-width="1.5"/></svg>
<svg class="a" style="left:0;top:0" width="2386.5" height="1519.5"><polyline points="813.5,99.0 816.5,102.0 819.5,99.0 822.5,102.0 825.5,99.0 828.5,102.0 831.5,99.0 834.5,102.0 837.5,99.0 840.5,102.0 843.5,99.0 846.5,102.0 849.5,99.0 852.5,102.0 855.5,99.0 858.5,102.0 861.5,99.0 864.5,102.0 867.5,99.0 870.5,102.0 873.5,99.0 876.5,102.0 879.5,99.0 882.5,102.0 885.5,99.0 888.5,102.0 891.5,99.0 894.5,102.0 897.5,99.0 900.5,102.0 903.5,99.0 906.5,102.0 909.5,99.0 912.5,102.0 915.5,99.0 918.5,102.0 921.5,99.0 924.5,102.0 927.5,99.0 930.5,102.0 933.5,99.0 936.5,102.0 939.5,99.0 942.5,102.0 945.5,99.0 948.5,102.0 951.5,99.0 954.5,102.0 957.5,99.0 960.5,102.0" fill="none" stroke="#9cc59c" stroke-width="1.1"/></svg>
<svg class="a" style="left:838.5px;top:1017.5px" width="13" height="31" viewBox="0 0 13 31"><path d="M0.8 0.8 H12.2 V5 H9 V26 H12.2 V30.2 H0.8 V26 H4 V5 H0.8Z" fill="#fff" stroke="#a0a0a0" stroke-width="1.2"/><path d="M2.5 3 H10.5 M2.5 28 H10.5 M6.5 3 V28" stroke="#222" stroke-width="1.6"/></svg>
<svg class="a" style="left:2363.5px;top:3.5px" width="22" height="24" viewBox="0 0 22 24"><path d="M2 7 L7.5 12.5 L19 2" stroke="#3e9a6a" stroke-width="3.5" fill="none"/><path d="M1 21 L5 17 L9 21 L13 17 L17 21 L20.5 17" stroke="#3e9a6a" stroke-width="1.6" fill="none"/></svg>
</div>
</body></html>
